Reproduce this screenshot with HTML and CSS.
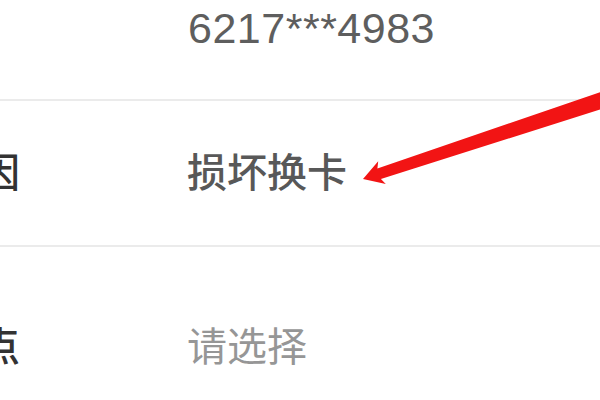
FILE: index.html
```html
<!DOCTYPE html>
<html lang="zh-CN">
<head>
<meta charset="utf-8">
<title>换卡</title>
<link rel="stylesheet" href="styles.css">
</head>
<body>
<div class="screen">
  <div class="list">
    <div class="row row-card">
      <span class="label">卡号</span>
      <span class="value num">6217***4983</span>
    </div>
    <div class="row row-reason">
      <span class="label">换卡原因</span>
      <span class="value">损坏换卡</span>
    </div>
    <div class="row row-branch">
      <span class="label">领卡网点</span>
      <span class="value placeholder">请选择</span>
    </div>
  </div>
  <svg class="arrow" viewBox="0 0 600 400" width="600" height="400" aria-hidden="true">
    <polygon points="363,179 378.2,161.3 377.4,168.5 617.3,86.2 622.7,102.4 380.9,178.9 385.8,184.1" fill="#f21414"/>
  </svg>
</div>
</body>
</html>
```
FILE: styles.css
```css
html, body {
  margin: 0;
  height: 100%;
  overflow: hidden;
  background: #ffffff;
}

.screen {
  position: relative;
  width: 600px;
  height: 400px;
  overflow: hidden;
  background: #ffffff;
  font-family: "Liberation Sans", "Noto Sans CJK SC", sans-serif;
}

.list {
  margin: -42px 0 0 -140px;
  width: 740px;
}

.row {
  display: flex;
  align-items: center;
  box-sizing: border-box;
  border-bottom: 2px solid #ebebeb;
}

.row-card {
  height: 143px;
}

.row-reason {
  height: 146px;
}

.row-branch {
  height: 200px;
  border-bottom: none;
}

.label {
  flex: 0 0 327px;
  font-size: 40px;
  line-height: 1;
  font-weight: 500;
  color: #333333;
}

.value {
  font-size: 40px;
  line-height: 1;
  font-weight: 500;
  color: #585858;
}

.num {
  font-size: 43px;
  font-weight: 400;
  letter-spacing: 0.5px;
  padding-left: 1px;
  color: #5e5e5e;
}

.placeholder {
  font-weight: 400;
  color: #969696;
}

.arrow {
  position: absolute;
  top: 0;
  left: 0;
  pointer-events: none;
}
```
